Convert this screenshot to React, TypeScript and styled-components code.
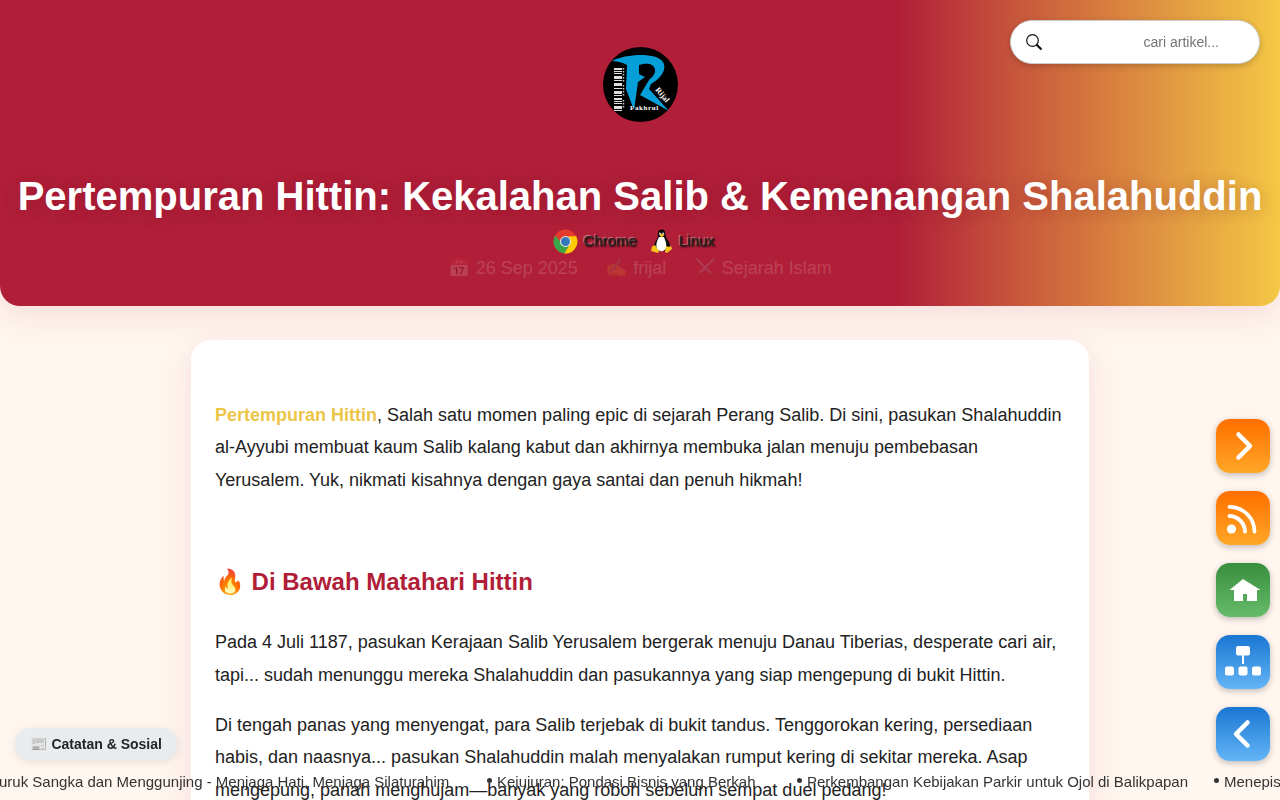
import React from "react";
import styled, { createGlobalStyle } from "styled-components";

const Global = createGlobalStyle`
  * { box-sizing: border-box; }
  html, body { margin: 0; height: 800px; overflow: hidden; }
  body { background: #fff6f0; color: #222; font-family: "Liberation Sans", Arial, "Noto Color Emoji", sans-serif; font-size: 18px; line-height: 1.8; }
`;

const Header = styled.header`
  height: 306px;
  padding-top: 47px;
  display: flex;
  flex-direction: column;
  align-items: center;
  border-radius: 0 0 20px 20px;
  background: linear-gradient(90deg, #b01e38 0%, #b01e38 70%, #c95a3c 80%, #f4c845 100%);
  box-shadow: 0 8px 32px rgba(176, 30, 56, 0.12);
`;

const Logo = styled.svg`
  width: 75px;
  height: 75px;
  display: block;
`;

const Title = styled.h1`
  margin: 50px 0 0;
  font-size: 40px;
  line-height: 48px;
  font-weight: 700;
  color: #fff;
  white-space: nowrap;
  text-shadow: 0 2px 16px rgba(120, 20, 40, 0.3);
`;

const Agents = styled.div`
  display: flex;
  align-items: center;
  margin: 9px 12px 0 0;
  height: 24px;
  gap: 12px;
`;

const Agent = styled.span`
  display: flex;
  align-items: center;
  gap: 5px;
  font-size: 15px;
  line-height: 24px;
  color: #222;
  text-shadow: 1px 1px 2px #000, -1px -1px 1px rgba(255, 255, 255, 0.45);
  svg { width: 25px; height: 25px; }
`;

const Meta = styled.div`
  display: flex;
  gap: 28px;
  margin-top: 1px;
  font-size: 18px;
  line-height: 28px;
  color: #fff;
  opacity: 0.15;
  white-space: pre;
`;

const Search = styled.label`
  position: fixed;
  top: 20px;
  right: 20px;
  width: 250px;
  height: 44px;
  padding: 0 40px 0 15px;
  display: flex;
  align-items: center;
  justify-content: space-between;
  border: 1px solid #ccc;
  border-radius: 22px;
  background: #fff;
  box-shadow: 0 2px 6px rgba(0, 0, 0, 0.2);
  font-size: 14px;
  line-height: 20px;
  color: #757575;
`;

const Article = styled.main`
  width: 898px;
  height: 700px;
  margin: 34px auto 0;
  padding: 59px 24px 0;
  border-radius: 20px;
  background: #fff;
  box-shadow: 0 8px 32px rgba(176, 30, 56, 0.12);
`;

const Paragraph = styled.p`
  margin: 0 0 18px;
  white-space: nowrap;
  strong { color: #ecc548; }
`;

const Heading = styled.h2`
  margin: 64px 0 23px;
  font-size: 24px;
  line-height: 43px;
  color: #b01e38;
`;

const Rail = styled.nav`
  position: fixed;
  top: 419px;
  right: 10px;
  display: flex;
  flex-direction: column;
  gap: 18px;
`;

const RailButton = styled.a<{ $from: string; $to: string }>`
  width: 54px;
  height: 54px;
  border-radius: 14px;
  background: linear-gradient(180deg, ${(p) => p.$from}, ${(p) => p.$to});
  box-shadow: 0 2px 6px rgba(0, 0, 0, 0.25);
  svg { display: block; width: 54px; height: 54px; }
`;

const NotesButton = styled.button`
  position: fixed;
  left: 15px;
  top: 728px;
  width: 162px;
  height: 32px;
  padding: 0;
  border: 0;
  border-radius: 16px;
  background: #e9ecef;
  box-shadow: 0 2px 8px rgba(0, 0, 0, 0.1);
  font: 700 14px/32px "Liberation Sans", "Noto Color Emoji", sans-serif;
  color: #212529;
`;

const Ticker = styled.ul`
  position: fixed;
  left: -11px;
  top: 770px;
  margin: 0;
  padding: 0;
  display: flex;
  list-style: none;
  font-size: 15px;
  line-height: 24px;
  color: #333;
  white-space: nowrap;
`;

const TickerItem = styled.li<{ $width: number; $bullet?: boolean }>`
  flex: 0 0 ${(p) => p.$width}px;
  display: flex;
  gap: 5px;
  &::before {
    content: "";
    display: ${(p) => (p.$bullet === false ? "none" : "block")};
    width: 5px;
    height: 5px;
    margin-top: 8px;
    border-radius: 50%;
    background: #333;
  }
`;

const bars = [0, 3, 5, 8, 10, 12, 15, 17, 20, 23, 25, 27, 30, 33, 35, 38, 40, 42];

const App = () => (
  <>
    <Global />
    <Header>
      <Logo viewBox="0 0 75 75">
        <circle cx="37.5" cy="37.5" r="37.5" fill="#000" />
        {bars.map((y, i) => (
          <rect key={y} x="11" y={21 + y} width="8" height={i % 3 === 0 ? 2 : 1} fill="#ddd" />
        ))}
        <path d="M20.500 21v14M20.500 38v11M20.500 53v9" stroke="#ccc" strokeWidth="1.500" strokeDasharray="1.500 1.500" />
        <path d="M9 14C23 7 53 5 60 15C65 24 55 33 48 37L46 42L66 64L37 48L46 33C53 27 54 22 49 18C44 16 41 17 36 18L36 27L42 30L35 35L31 63L23 42L24 18C18 15 13 14 9 14Z" fill="#049fd9" />
        <path d="M36 18L42 18L36 27Z" fill="#000" />
        <text x="27" y="63" fill="#fff" fontSize="7" fontWeight="700" fontFamily="Liberation Serif" letterSpacing=".6">Fakhrul</text>
        <text transform="translate(52 43) rotate(50)" fill="#fff" fontSize="8" fontWeight="700" fontFamily="Liberation Serif">Rijal</text>
      </Logo>
      <Title>Pertempuran Hittin: Kekalahan Salib &amp; Kemenangan Shalahuddin</Title>
      <Agents>
        <Agent>
          <svg viewBox="0 0 48 48">
            <circle cx="24" cy="24" r="23" fill="#e33b2e" />
            <path d="M4 12.500A23 23 0 0 0 22 47L33 29L24 24H14Z" fill="#3aa648" />
            <path d="M44.500 14A23 23 0 0 1 22 47L33 28L30 14Z" fill="#fc0" />
            <circle cx="24" cy="24" r="10.500" fill="#eee" />
            <circle cx="24" cy="24" r="8.500" fill="#3177b9" />
          </svg>
          Chrome
        </Agent>
        <Agent>
          <svg viewBox="0 0 25 25">
            <path d="M12.500 .5C8.500 .5 9 4 9 7C9 10 5 13 5 18L7 22H19L21 17C21 12 16.500 10 16.500 6C16.500 2.500 15.500 .5 12.500 .5Z" fill="#090909" />
            <path d="M10 8C8 12 6.500 15 8 20C10 23 16 23 17 19C18 14 16 11 15 8Z" fill="#fff" />
            <path d="M10 5.500L12.500 4.500L15.500 6L12.500 8.500Z" fill="#f6bd22" />
            <circle cx="11" cy="4.500" r="1" fill="#ddd" />
            <circle cx="14.300" cy="4.500" r="1" fill="#ddd" />
            <path d="M3 17.500L6 16L10 22L9 24L2 22ZM17 17L20 18L22 17L23 20L18 24L16 23Z" fill="#f9c51d" />
          </svg>
          Linux
        </Agent>
      </Agents>
      <Meta>
        <span>📅 26 Sep 2025</span>
        <span>✍️ frijal</span>
        <span>⚔️ Sejarah Islam</span>
      </Meta>
    </Header>
    <Search>
      <svg width="17" height="17" viewBox="0 0 17 17" fill="none" stroke="#111">
        <circle cx="6.500" cy="6.500" r="5.800" strokeWidth="1.200" />
        <path d="M10.500 10.500L15.500 15.500" strokeWidth="2.200" />
      </svg>
      cari artikel...
    </Search>
    <Article>
      <Paragraph>
        <strong>Pertempuran Hittin</strong>, Salah satu momen paling epic di sejarah Perang Salib. Di sini, pasukan Shalahuddin<br />
        al-Ayyubi membuat kaum Salib kalang kabut dan akhirnya membuka jalan menuju pembebasan<br />
        Yerusalem. Yuk, nikmati kisahnya dengan gaya santai dan penuh hikmah!
      </Paragraph>
      <Heading>🔥 Di Bawah Matahari Hittin</Heading>
      <Paragraph>
        Pada 4 Juli 1187, pasukan Kerajaan Salib Yerusalem bergerak menuju Danau Tiberias, desperate cari air,<br />
        tapi... sudah menunggu mereka Shalahuddin dan pasukannya yang siap mengepung di bukit Hittin.
      </Paragraph>
      <Paragraph>
        Di tengah panas yang menyengat, para Salib terjebak di bukit tandus. Tenggorokan kering, persediaan<br />
        habis, dan naasnya... pasukan Shalahuddin malah menyalakan rumput kering di sekitar mereka. Asap<br />
        mengepung, panah menghujam—banyak yang roboh sebelum sempat duel pedang!
      </Paragraph>
    </Article>
    <Rail>
      <RailButton $from="#ff6f00" $to="#ffa726">
        <svg viewBox="0 0 54 54" fill="none" stroke="#fff" strokeWidth="4.500" strokeLinecap="round" strokeLinejoin="round"><path d="M22.500 15.500L34 27L22.500 38.500" /></svg>
      </RailButton>
      <RailButton $from="#ff6f00" $to="#ffa726">
        <svg viewBox="0 0 54 54" fill="none" stroke="#fff" strokeWidth="3.800" strokeLinecap="round"><circle cx="15.500" cy="38" r="4.600" fill="#fff" stroke="none" /><path d="M13.500 25A16 16 0 0 1 29 40.500M13.500 15.800A25 25 0 0 1 38.500 40.500" /></svg>
      </RailButton>
      <RailButton $from="#388e3c" $to="#66bb6a">
        <svg viewBox="0 0 54 54" fill="#fff"><path d="M27 16L44.500 27H41V38H31V31H27V38H18V27H13.500Z" /></svg>
      </RailButton>
      <RailButton $from="#1976d2" $to="#64b5f6">
        <svg viewBox="0 0 54 54" fill="#fff"><rect x="20" y="11" width="14" height="9.500" rx="2" /><rect x="26" y="20" width="2" height="9" /><rect x="9" y="31.500" width="9" height="9" rx="2" /><rect x="22.500" y="31.500" width="9" height="9" rx="2" /><rect x="36" y="31.500" width="9" height="9" rx="2" /></svg>
      </RailButton>
      <RailButton $from="#1976d2" $to="#64b5f6">
        <svg viewBox="0 0 54 54" fill="none" stroke="#fff" strokeWidth="4.500" strokeLinecap="round" strokeLinejoin="round"><path d="M31.500 15.500L20 27L31.500 38.500" /></svg>
      </RailButton>
    </Rail>
    <NotesButton>📰 Catatan &amp; Sosial</NotesButton>
    <Ticker>
      <TickerItem $width={498} $bullet={false}>Buruk Sangka dan Menggunjing - Menjaga Hati, Menjaga Silaturahim</TickerItem>
      <TickerItem $width={310} $bullet>Kejujuran: Pondasi Bisnis yang Berkah</TickerItem>
      <TickerItem $width={417} $bullet>Perkembangan Kebijakan Parkir untuk Ojol di Balikpapan</TickerItem>
      <TickerItem $width={200} $bullet>Menepis</TickerItem>
    </Ticker>
  </>
);

export default App;
